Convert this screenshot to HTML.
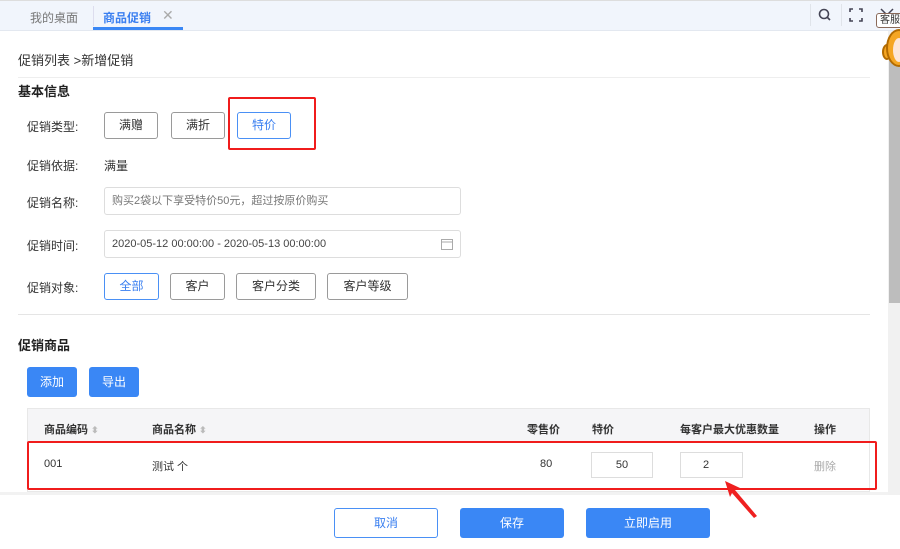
<!DOCTYPE html>
<html><head><meta charset="utf-8"><style>
*{box-sizing:border-box;margin:0;padding:0}
body{width:900px;height:549px;overflow:hidden;background:#fff;font-family:"Liberation Sans","Noto Sans CJK SC",sans-serif;font-size:12px;color:#333;position:relative}
.a{position:absolute}
.btn{position:absolute;height:27px;border:1px solid #9a9a9a;border-radius:3px;text-align:center;line-height:25px;font-size:12px;color:#333;background:#fff}
.btn.on{border-color:#4a90f5;color:#3a7ff0}
.pb{position:absolute;background:#3a87f5;color:#fff;border-radius:3px;text-align:center;font-size:12px}
.lbl{position:absolute;left:27px;font-size:12px;color:#333}
.inp{position:absolute;left:104px;width:357px;height:28px;border:1px solid #ddd;border-radius:3px;padding-left:7px;line-height:26px;font-size:11px}
</style></head><body>
<div class="a" style="left:0;top:0;width:900px;height:31px;background:#f1f5fc;border-bottom:1px solid #e3e8f0;border-top:1px solid #ddd"></div>
<div class="a" style="left:30px;top:9px;color:#777">我的桌面</div>
<div class="a" style="left:93px;top:6px;width:1px;height:20px;background:#dde"></div>
<div class="a" style="left:103px;top:9px;color:#3a7ff0;font-weight:bold">商品促销</div>
<div class="a" style="left:162px;top:7px;color:#aaa;font-size:14px">✕</div>
<div class="a" style="left:93px;top:27px;width:90px;height:3px;background:#3a87f5"></div>
<div class="a" style="left:810px;top:4px;width:1px;height:22px;background:#e0e4ea"></div>
<div class="a" style="left:841px;top:4px;width:1px;height:22px;background:#e0e4ea"></div>
<svg class="a" style="left:817px;top:7px" width="16" height="16"><circle cx="7" cy="7" r="4.5" fill="none" stroke="#445" stroke-width="1.6"/><line x1="10.5" y1="10.5" x2="13" y2="13" stroke="#445" stroke-width="1.6"/></svg>
<svg class="a" style="left:849px;top:8px" width="14" height="14"><path d="M1 4V1h3M10 1h3v3M13 10v3h-3M4 13H1v-3" fill="none" stroke="#445" stroke-width="1.6"/></svg>
<svg class="a" style="left:880px;top:8px" width="14" height="8"><path d="M1 1l6 6 6-6" fill="none" stroke="#445" stroke-width="1.5"/></svg>
<div class="a" style="left:888px;top:31px;width:12px;height:464px;background:#f1f1f1"></div>
<div class="a" style="left:889px;top:40px;width:11px;height:263px;background:#bdbdbd"></div>
<div class="a" style="left:876px;top:13px;width:30px;height:15px;border:1px solid #8a6a5a;border-radius:3px;background:#fff;font-size:10px;line-height:13px;padding-left:3px;color:#333">客服</div>
<div class="a" style="left:882px;top:44px;width:10px;height:16px;border-radius:50%;background:#f5a623;border:2px solid #b36b00"></div>
<div class="a" style="left:886px;top:29px;width:26px;height:38px;border-radius:50%;background:#f5a623;border:2px solid #b36b00"></div>
<div class="a" style="left:893px;top:38px;width:12px;height:24px;border-radius:50%;background:#fde6d8"></div>

<div class="a" style="left:18px;top:50px;font-size:13px">促销列表 &gt;新增促销</div>
<div class="a" style="left:18px;top:77px;width:852px;height:1px;background:#eee"></div>
<div class="a" style="left:18px;top:81px;font-size:13px;font-weight:bold;color:#222">基本信息</div>

<div class="lbl" style="top:118px">促销类型:</div>
<div class="btn" style="left:104px;top:112px;width:54px">满赠</div>
<div class="btn" style="left:171px;top:112px;width:54px">满折</div>
<div class="btn on" style="left:237px;top:112px;width:54px">特价</div>
<div class="a" style="left:228px;top:97px;width:88px;height:53px;border:2px solid #f01c1c;border-radius:2px"></div>

<div class="lbl" style="top:157px">促销依据:</div>
<div class="a" style="left:104px;top:157px">满量</div>
<div class="lbl" style="top:194px">促销名称:</div>
<div class="inp" style="top:187px;color:#777">购买2袋以下享受特价50元，超过按原价购买</div>
<div class="lbl" style="top:237px">促销时间:</div>
<div class="inp" style="top:230px;color:#444">2020-05-12 00:00:00 - 2020-05-13 00:00:00</div>
<svg class="a" style="left:441px;top:238px" width="12" height="12"><rect x="0.5" y="1.5" width="11" height="10" fill="none" stroke="#aaa"/><line x1="0.5" y1="4" x2="11.5" y2="4" stroke="#aaa"/></svg>

<div class="lbl" style="top:279px">促销对象:</div>
<div class="btn on" style="left:104px;top:273px;width:55px">全部</div>
<div class="btn" style="left:170px;top:273px;width:55px">客户</div>
<div class="btn" style="left:236px;top:273px;width:80px">客户分类</div>
<div class="btn" style="left:327px;top:273px;width:81px">客户等级</div>
<div class="a" style="left:18px;top:314px;width:852px;height:1px;background:#e5e5e5"></div>

<div class="a" style="left:18px;top:335px;font-size:13px;font-weight:bold;color:#222">促销商品</div>
<div class="pb" style="left:27px;top:367px;width:50px;height:30px;line-height:30px">添加</div>
<div class="pb" style="left:89px;top:367px;width:50px;height:30px;line-height:30px">导出</div>

<div class="a" style="left:27px;top:408px;width:843px;height:84px;border:1px solid #e8e8e8;background:#fff"></div>
<div class="a" style="left:28px;top:409px;width:841px;height:32px;background:#f5f5f7"></div>
<div class="a" style="left:44px;top:421px;font-weight:bold;font-size:11px">商品编码 <span style="color:#bbb;font-size:9px">⬍</span></div>
<div class="a" style="left:152px;top:421px;font-weight:bold;font-size:11px">商品名称 <span style="color:#bbb;font-size:9px">⬍</span></div>
<div class="a" style="left:527px;top:421px;font-weight:bold;font-size:11px">零售价</div>
<div class="a" style="left:592px;top:421px;font-weight:bold;font-size:11px">特价</div>
<div class="a" style="left:680px;top:421px;font-weight:bold;font-size:11px">每客户最大优惠数量</div>
<div class="a" style="left:814px;top:421px;font-weight:bold;font-size:11px">操作</div>
<div class="a" style="left:44px;top:458px;font-size:11px">001</div>
<div class="a" style="left:152px;top:458px;font-size:11px">测试 个</div>
<div class="a" style="left:540px;top:458px;font-size:11px">80</div>
<div class="a" style="left:591px;top:452px;width:62px;height:26px;border:1px solid #ddd;text-align:center;line-height:24px;font-size:11px">50</div>
<div class="a" style="left:680px;top:452px;width:63px;height:26px;border:1px solid #ddd;line-height:24px;padding-left:22px;font-size:11px">2</div>
<div class="a" style="left:814px;top:458px;font-size:11px;color:#aaa">删除</div>
<div class="a" style="left:27px;top:441px;width:850px;height:49px;border:2px solid #f01c1c;border-radius:2px"></div>
<div class="a" style="left:0;top:492px;width:888px;height:3px;background:#f2f2f2"></div>

<div class="a" style="left:334px;top:508px;width:104px;height:30px;border:1px solid #4a90f5;border-radius:3px;text-align:center;line-height:28px;color:#3a7ff0">取消</div>
<div class="pb" style="left:460px;top:508px;width:104px;height:30px;line-height:30px">保存</div>
<div class="pb" style="left:586px;top:508px;width:124px;height:30px;line-height:30px">立即启用</div>
<svg class="a" style="left:720px;top:478px" width="45" height="45"><path d="M5 3L20 10 15 12 37 38 34 40 12 15 10 19Z" fill="#ef2020"/></svg>
</body></html>
